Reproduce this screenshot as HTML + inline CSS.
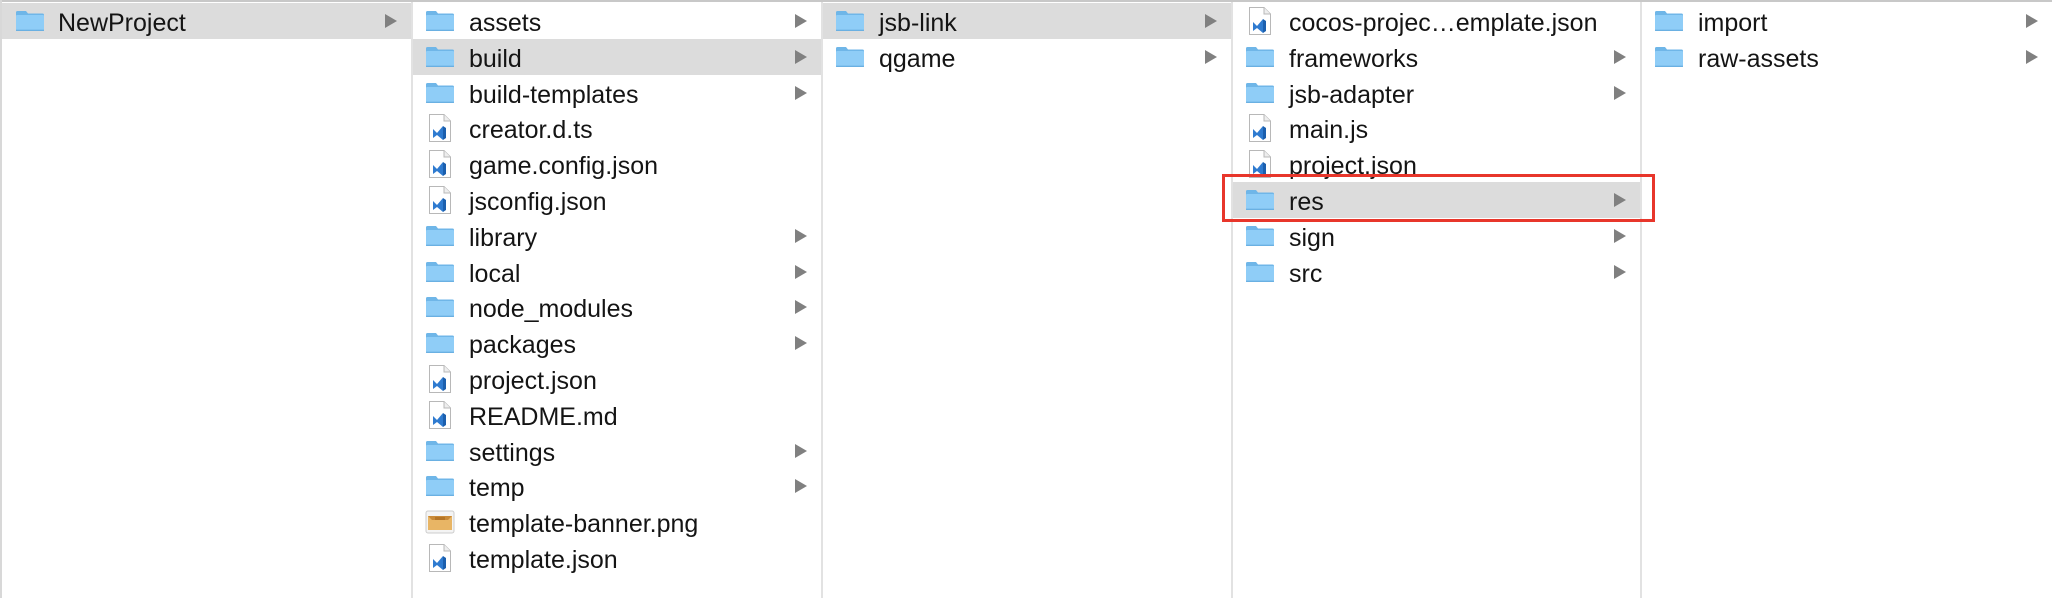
<!DOCTYPE html>
<html><head><meta charset="utf-8"><style>
body{margin:0;width:2052px;height:598px;background:#fff;position:relative;overflow:hidden;font-family:"Liberation Sans",Arial,sans-serif;}
.top{position:absolute;left:0;top:0;width:2052px;height:2px;background:#c8c8c8}
.lft{position:absolute;left:0;top:0;width:2px;height:598px;background:#d8d8d8}
.col{position:absolute;top:2px;height:596px;border-right:2px solid #e2e2e2;box-sizing:border-box}
.row{position:absolute;left:0;right:0;height:36px;font-size:25px;color:#141414;line-height:36px}
.row.sel{background:#dcdcdc}
.row svg{position:absolute;top:7px}
.row .t{position:absolute;left:56px;top:2px;white-space:nowrap}
.row .a{position:absolute;right:14px;top:11px;width:0;height:0;border-left:12px solid #808080;border-top:7px solid transparent;border-bottom:7px solid transparent}
.red{position:absolute;left:1222px;top:174px;width:433px;height:48px;border:3px solid #e8362b;box-sizing:border-box}
</style></head><body>
<div class="top"></div>
<svg width="0" height="0" style="position:absolute">
<defs>
<symbol id="fold" viewBox="0 0 30 22"><path d="M1 2.5Q1 1 2.5 1H11l2 2.5H27.5Q29 3.5 29 5V20Q29 21 28 21H2Q1 21 1 20Z" fill="#6fb6e8"/><path d="M1 6Q1 5 2 5H28Q29 5 29 6V20Q29 21 28 21H2Q1 21 1 20Z" fill="#8fcdf7"/><path d="M1 20.3H29" stroke="#5ea6dc" stroke-width="1"/></symbol>
<symbol id="file" viewBox="0 0 24 30"><path d="M1.5 1.5H16L22.5 8V28.5H1.5Z" fill="#fff" stroke="#b8b8b8"/><path d="M16 1.5V8H22.5" fill="#eee" stroke="#b8b8b8"/><path d="M5 16L9 20L15 13V27L9 22L5 25Z" fill="#2f7bd0"/><path d="M15 13L18 15V25L15 27Z" fill="#1b5fae"/></symbol>
<symbol id="png" viewBox="0 0 30 24"><rect x="1" y="1" width="28" height="22" rx="2" fill="#f4f4f4" stroke="#ccc"/><rect x="3" y="6" width="24" height="14" fill="#e8b565"/><path d="M3 6H27L23 10H7Z" fill="#c98a38"/><rect x="10" y="7" width="10" height="3" fill="#b57526"/></symbol>
</defs></svg>

<div class="col" style="left:0;width:413px">
<div class="row sel" style="top:1px;left:2px"><svg style="left:13px" width="30" height="22"><use href="#fold"/></svg><span class="t" style="left:56px">NewProject</span><i class="a"></i></div>
</div>
<div class="lft"></div>

<div class="col" style="left:413px;width:410px" id="c2"></div>
<div class="col" style="left:823px;width:410px" id="c3"></div>
<div class="col" style="left:1233px;width:409px" id="c4"></div>
<div class="col" style="left:1642px;width:410px;border-right:none" id="c5"></div>

<div class="red"></div>
<script>
function fill(id,items,sel){var c=document.getElementById(id),h='';items.forEach(function(it,i){var k=it[1],ic=k=='f'?'<svg style="left:12px" width="30" height="22"><use href="#fold"/></svg>':k=='p'?'<svg style="left:12px;top:6px" width="30" height="24"><use href="#png"/></svg>':'<svg style="left:15px;top:3px" width="24" height="30"><use href="#file"/></svg>';h+='<div class="row'+(i===sel?' sel':'')+'" style="top:'+(1+i*35.8)+'px">'+ic+'<span class="t">'+it[0]+'</span>'+(k=='f'?'<i class="a"></i>':'')+'</div>';});c.innerHTML=h;}
fill('c2',[['assets','f'],['build','f'],['build-templates','f'],['creator.d.ts','j'],['game.config.json','j'],['jsconfig.json','j'],['library','f'],['local','f'],['node_modules','f'],['packages','f'],['project.json','j'],['README.md','j'],['settings','f'],['temp','f'],['template-banner.png','p'],['template.json','j']],1);
fill('c3',[['jsb-link','f'],['qgame','f']],0);
fill('c4',[['cocos-projec…emplate.json','j'],['frameworks','f'],['jsb-adapter','f'],['main.js','j'],['project.json','j'],['res','f'],['sign','f'],['src','f']],5);
fill('c5',[['import','f'],['raw-assets','f']],-1);
</script>
</body></html>
